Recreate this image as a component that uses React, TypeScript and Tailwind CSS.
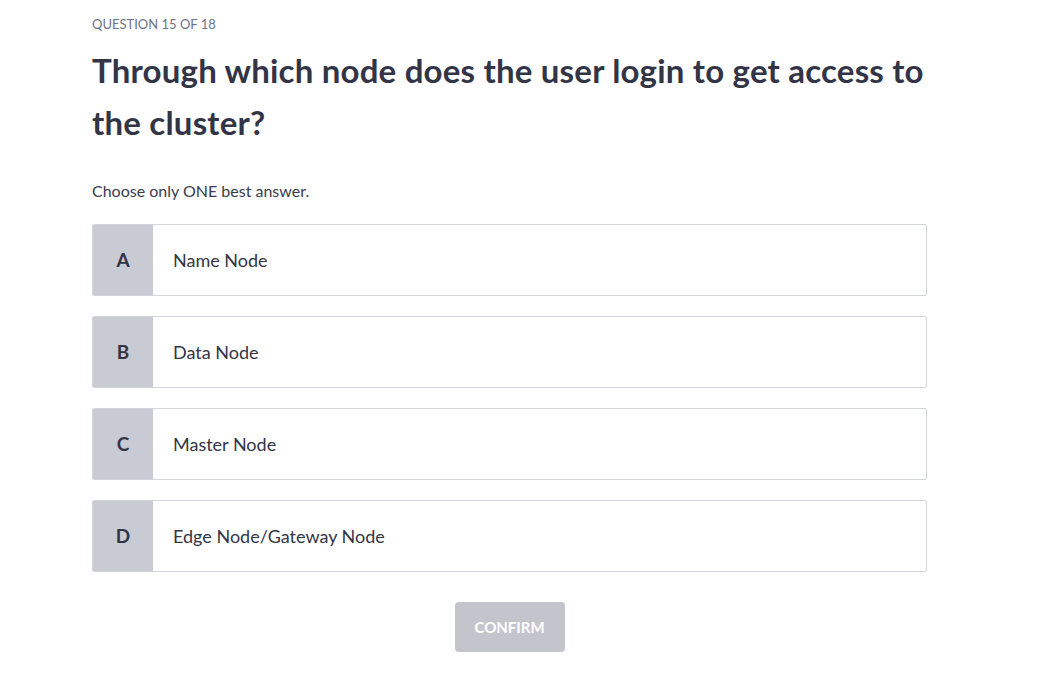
const options = [
  { key: "A", label: "Name Node" },
  { key: "B", label: "Data Node" },
  { key: "C", label: "Master Node" },
  { key: "D", label: "Edge Node/Gateway Node" },
];

export default function App() {
  return (
    <div className="min-h-screen bg-white font-['Lato','Noto_Sans',sans-serif] text-[#333547]">
      <div className="ml-[92px] w-[835px] pt-[15px]">
        <div className="text-[13px] leading-[18px] uppercase text-[#6e7285]">
          Question 15 of 18
        </div>
        <h1 className="mt-[11px] text-[33px] leading-[52px] font-bold tracking-[0.2px]">
          Through which node does the user login to get access to the cluster?
        </h1>
        <p className="mt-[33px] text-[16px] leading-[20px] text-[#3a3c4d]">
          Choose only ONE best answer.
        </p>
        <div className="mt-[23px] flex flex-col gap-[20px]">
          {options.map((o) => (
            <button
              key={o.key}
              type="button"
              className="flex h-[72px] w-full overflow-hidden rounded-[2px] border border-[#d3d5dd] bg-white text-left"
            >
              <span className="flex h-full w-[60px] items-center justify-center bg-[#c9cbd4] text-[19px] font-bold text-[#333547]">
                {o.key}
              </span>
              <span className="flex h-full items-center pl-[20px] text-[18px] text-[#333547]">
                {o.label}
              </span>
            </button>
          ))}
        </div>
        <div className="mt-[30px] flex justify-center">
          <button
            type="button"
            className="h-[50px] w-[110px] rounded-[4px] bg-[#c4c5cc] text-[15px] font-bold uppercase text-white"
          >
            Confirm
          </button>
        </div>
      </div>
    </div>
  );
}
